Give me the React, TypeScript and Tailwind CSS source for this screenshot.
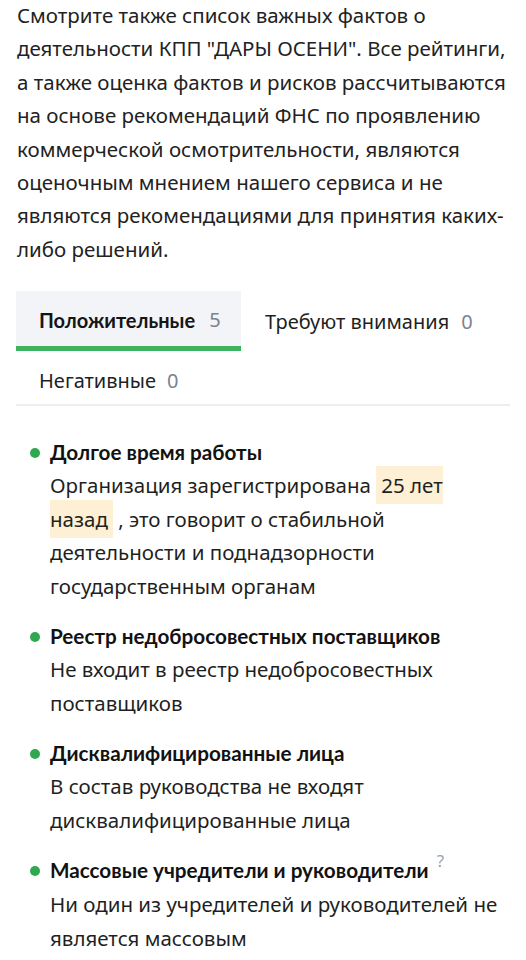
import React from "react";

const body = { fontFamily: '"Noto Sans", "Open Sans", sans-serif' };
const bold = { fontFamily: 'Lato, "Noto Sans", sans-serif' };

function Item({ title, children, q }: { title: string; children: React.ReactNode; q?: boolean }) {
  return (
    <div className="flex">
      <div className="w-[33px] shrink-0 flex items-start pl-[13px] pt-[12px]">
        <span className="block w-[10px] h-[10px] rounded-full bg-[#2fa84f]" />
      </div>
      <div className="flex-1">
        <div className="text-[20.7px] leading-[33px] font-bold text-[#121212]" style={bold}>
          {title}
          {q && (
            <span className="relative -top-[11px] ml-[8px] text-[17px] text-[#9aa3b2] font-normal" style={body}>
              ?
            </span>
          )}
        </div>
        <div className="text-[20.5px] leading-[33.5px] text-[#1f1f1f]">{children}</div>
      </div>
    </div>
  );
}

export default function App() {
  return (
    <div className="w-[526px] h-[960px] bg-white overflow-hidden text-[#1f1f1f]" style={body}>
      <p className="pl-[17px] pr-[14px] text-[20.5px] leading-[33.4px] text-[#222] -mt-[1px]">
        Смотрите также список важных фактов о деятельности КПП "ДАРЫ ОСЕНИ". Все рейтинги, а также оценка фактов и рисков рассчитываются на основе рекомендаций ФНС по проявлению коммерческой осмотрительности, являются оценочным мнением нашего сервиса и не являются рекомендациями для принятия каких-либо решений.
      </p>

      <div className="mx-[16px] mt-[25px] border-b-2 border-[#eceef1]">
        <div className="flex">
          <div className="w-[225px] h-[60px] bg-[#f3f4f7] border-b-[5px] border-[#3cb35c] flex items-center pl-[23px] pt-[2px]">
            <span className="text-[20px] font-bold text-[#151515]" style={bold}>Положительные</span>
            <span className="ml-[14px] text-[20px] text-[#7a8394]">5</span>
          </div>
          <div className="h-[60px] flex items-center pl-[24px] pt-[2px]">
            <span className="text-[20px] text-[#1f1f1f]">Требуют внимания</span>
            <span className="ml-[12px] text-[20px] text-[#7a8394]">0</span>
          </div>
        </div>
        <div className="h-[53px] flex items-center pl-[23px] pt-[6px]">
          <span className="text-[20px] text-[#1f1f1f]">Негативные</span>
          <span className="ml-[11px] text-[20px] text-[#7a8394]">0</span>
        </div>
      </div>

      <div className="mt-[30px] pl-[17px] pr-[20px] flex flex-col gap-[17px]">
        <Item title="Долгое время работы">
          Организация зарегистрирована{" "}
          <span className="bg-[#fdf0d4] px-[5px] py-[5px]">25 лет назад</span>{" "}
          , это говорит о стабильной деятельности и поднадзорности государственным органам
        </Item>
        <Item title="Реестр недобросовестных поставщиков">
          Не входит в реестр недобросовестных поставщиков
        </Item>
        <Item title="Дисквалифицированные лица">
          В состав руководства не входят дисквалифицированные лица
        </Item>
        <Item title="Массовые учредители и руководители" q>
          Ни один из учредителей и руководителей не является массовым
        </Item>
      </div>
    </div>
  );
}
